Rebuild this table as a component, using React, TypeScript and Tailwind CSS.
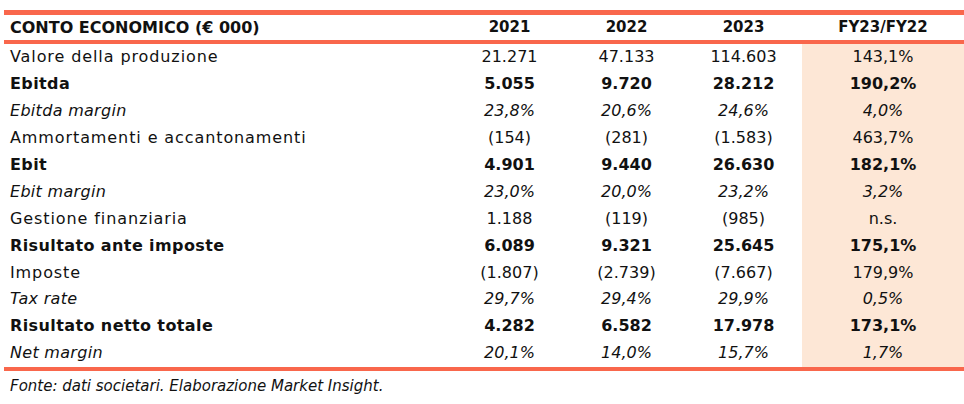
const rows = [
  { label: "Valore della produzione", v: ["21.271", "47.133", "114.603", "143,1%"], kind: "normal" },
  { label: "Ebitda", v: ["5.055", "9.720", "28.212", "190,2%"], kind: "bold" },
  { label: "Ebitda margin", v: ["23,8%", "20,6%", "24,6%", "4,0%"], kind: "italic" },
  { label: "Ammortamenti e accantonamenti", v: ["(154)", "(281)", "(1.583)", "463,7%"], kind: "normal" },
  { label: "Ebit", v: ["4.901", "9.440", "26.630", "182,1%"], kind: "bold" },
  { label: "Ebit margin", v: ["23,0%", "20,0%", "23,2%", "3,2%"], kind: "italic" },
  { label: "Gestione finanziaria", v: ["1.188", "(119)", "(985)", "n.s."], kind: "normal" },
  { label: "Risultato ante imposte", v: ["6.089", "9.321", "25.645", "175,1%"], kind: "bold" },
  { label: "Imposte", v: ["(1.807)", "(2.739)", "(7.667)", "179,9%"], kind: "normal" },
  { label: "Tax rate", v: ["29,7%", "29,4%", "29,9%", "0,5%"], kind: "italic" },
  { label: "Risultato netto totale", v: ["4.282", "6.582", "17.978", "173,1%"], kind: "bold" },
  { label: "Net margin", v: ["20,1%", "14,0%", "15,7%", "1,7%"], kind: "italic" },
];

const cols = "grid grid-cols-[447px_117px_117px_117px_162px]";

export default function App() {
  return (
    <div className="w-[964px] h-[404px] bg-white pt-[10px] pl-[4px] text-[#111] font-['DejaVu_Sans',sans-serif]">
      <div className="h-[5px] bg-[#f9674c]" />
      <div className={`${cols} h-[25px] items-center text-[15px] font-bold`}>
        <div className="pl-[6px] text-[16px]">CONTO ECONOMICO (€ 000)</div>
        <div className="text-center">2021</div>
        <div className="text-center">2022</div>
        <div className="text-center">2023</div>
        <div className="text-center">FY23/FY22</div>
      </div>
      <div className="h-[4px] bg-[#f9674c]" />
      <div className="flex flex-col">
        {rows.map((r) => (
          <div
            key={r.label}
            className={`${cols} h-[26.9px] items-center text-[16px] ${
              r.kind === "bold" ? "font-bold" : r.kind === "italic" ? "italic" : ""
            }`}
          >
            <div
              className={`pl-[6px] ${
                r.kind === "bold" ? "tracking-[0.4px]" : r.kind === "italic" ? "tracking-[0.3px]" : "tracking-[0.9px]"
              }`}
            >
              {r.label}
            </div>
            <div className="text-center">{r.v[0]}</div>
            <div className="text-center">{r.v[1]}</div>
            <div className="text-center">{r.v[2]}</div>
            <div className="text-center bg-[#fde7d6] h-full flex items-center justify-center">{r.v[3]}</div>
          </div>
        ))}
      </div>
      <div className="h-[4px] bg-[#f9674c]" />
      <div className="pl-[6px] pt-[4px] text-[15px] italic">Fonte: dati societari. Elaborazione Market Insight.</div>
    </div>
  );
}
